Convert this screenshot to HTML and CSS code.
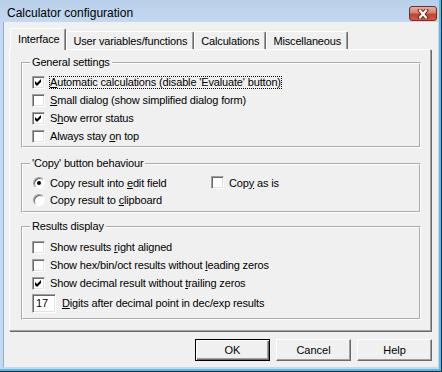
FILE: index.html
```html
<!DOCTYPE html>
<html lang="en">
<head>
    <meta charset="UTF-8">
    <title>Calculator configuration</title>
    <link rel="stylesheet" href="styles.css">
</head>
<body>
    <div class="window">
        <div class="titlebar">
            <span class="title">Calculator configuration</span>
            <span class="close">
                <svg width="14" height="10" viewBox="0 0 14 10">
                    <path d="M4 1.5 L10 8.5 M10 1.5 L4 8.5" stroke="#5a1f16" stroke-width="4" stroke-linecap="square"/>
                    <path d="M4 1.5 L10 8.5 M10 1.5 L4 8.5" stroke="#fff" stroke-width="2.2" stroke-linecap="square"/>
                </svg>
            </span>
        </div>
        <div class="client">
            <div class="tabs">
                <div class="tab tab--active">Interface</div>
                <div class="tab">User variables/functions</div>
                <div class="tab">Calculations</div>
                <div class="tab">Miscellaneous</div>
            </div>
            <div class="panel">
                <fieldset class="group group--general">
                    <legend>General settings</legend>
                    <div class="opt"><span class="box box--on"></span><span class="focus"><u>A</u>utomatic calculations (disable 'Evaluate' button)</span></div>
                    <div class="opt"><span class="box"></span><span><u>S</u>mall dialog (show simplified dialog form)</span></div>
                    <div class="opt"><span class="box box--on"></span><span>S<u>h</u>ow error status</span></div>
                    <div class="opt"><span class="box"></span><span>Always stay <u>o</u>n top</span></div>
                </fieldset>
                <fieldset class="group group--copy">
                    <legend>'Copy' button behaviour</legend>
                    <div class="copy-grid">
                        <div class="opt opt--short"><span class="radio radio--on"></span><span>Copy result into <u>e</u>dit field</span></div>
                        <div class="opt opt--short"><span class="box"></span><span>Cop<u>y</u> as is</span></div>
                        <div class="opt opt--short"><span class="radio"></span><span>Copy result to <u>c</u>lipboard</span></div>
                    </div>
                </fieldset>
                <fieldset class="group group--results">
                    <legend>Results display</legend>
                    <div class="opt"><span class="box"></span><span>Show results <u>r</u>ight aligned</span></div>
                    <div class="opt"><span class="box"></span><span>Show hex/bin/oct results without <u>l</u>eading zeros</span></div>
                    <div class="opt"><span class="box box--on"></span><span>Show decimal result without <u>t</u>railing zeros</span></div>
                    <div class="opt opt--edit"><span class="edit">17</span><span><u>D</u>igits after decimal point in dec/exp results</span></div>
                </fieldset>
            </div>
            <div class="buttons">
                <div class="btn btn--default">OK</div>
                <div class="btn">Cancel</div>
                <div class="btn">Help</div>
            </div>
        </div>
    </div>
</body>
</html>
```

FILE: styles.css
```css
html, body {
    margin: 0;
    background: #c6daf0;
}
body {
    font-family: "Liberation Sans", Arial, sans-serif;
    font-size: 11px;
    color: #000;
}
u {
    text-decoration: underline;
    text-underline-offset: 1px;
}

/* window frame */
.window {
    width: 442px;
    height: 372px;
    box-sizing: border-box;
    padding: 0 4px 5px;
    background: linear-gradient(#b9d0ea, #c4d8ef 22px, #c4d8ef);
    box-shadow: inset -1px -1px 0 #1d2733, inset -3px -3px 0 #45c3f0;
    display: flex;
    flex-direction: column;
}
.titlebar {
    height: 22px;
    display: flex;
    justify-content: space-between;
    align-items: flex-start;
    padding-left: 3px;
}
.title {
    font-size: 12px;
    line-height: 14px;
    margin-top: 6px;
}
.close {
    width: 28px;
    height: 15px;
    margin: 6px 1px 0 0;
    box-sizing: border-box;
    border: 1px solid #7b2c20;
    border-radius: 3px;
    background: linear-gradient(#e9ad9f, #d8806e 45%, #c2432f 55%, #cf5a45);
    display: flex;
    align-items: center;
    justify-content: center;
}
.close svg {
    display: block;
}

.client {
    flex: 1;
    background: #f0f0f0;
    box-shadow: -1px 0 0 #93adcb;
    display: flex;
    flex-direction: column;
    padding: 6px 0;
}

/* tabs */
.tabs {
    height: 22px;
    margin: 0 0 -1px 6px;
    display: flex;
    align-items: flex-end;
    position: relative;
    z-index: 1;
}
.tab {
    height: 18px;
    box-sizing: border-box;
    margin-bottom: 1px;
    padding: 2px 6px 0;
    line-height: 15px;
    letter-spacing: -0.15px;
    white-space: nowrap;
    background: #f0f0f0;
    border: 1px solid;
    border-bottom: none;
    border-color: #fff #696969 #fff #fff;
    box-shadow: inset -1px 0 0 #a0a0a0;
    border-radius: 2px 2px 0 0;
}
.tab--active {
    height: 22px;
    margin-bottom: 0;
    padding: 3px 6px 0 7px;
}

.panel {
    flex: 1;
    margin: 0 7px 8px 5px;
    border: 1px solid;
    border-color: #fff #a0a0a0 #a0a0a0 #fff;
    box-shadow: 1px 1px 0 #696969;
    padding: 0 9px 0 11px;
}

/* group boxes */
.group {
    margin: 0;
    border: 2px groove #fff;
    padding: 4px 8px 1px 9px;
    letter-spacing: -0.15px;
}
.group legend {
    padding: 0 2px;
    margin-left: -2px;
    line-height: 13px;
}
.group--general {
    margin-top: 6px;
}
.group--copy {
    margin-top: 9px;
    padding-bottom: 3px;
}
.group--results {
    margin-top: 7px;
    padding-top: 5px;
    padding-bottom: 4px;
}

.opt {
    height: 18px;
    display: flex;
    align-items: center;
    gap: 5px;
    white-space: nowrap;
}
.opt--short {
    height: 17px;
}
.opt--edit {
    height: 22px;
    gap: 6px;
}
.copy-grid {
    display: grid;
    grid-template-columns: 179px auto;
}

.focus {
    border: 1px dotted #000;
    margin-left: -1px;
    line-height: 11px;
}

/* checkbox, radio, edit */
.box {
    width: 13px;
    height: 13px;
    box-sizing: border-box;
    flex: none;
    background: #fff;
    border: 1px solid;
    border-color: #a0a0a0 #fff #fff #a0a0a0;
    box-shadow: inset 1px 1px 0 #696969, inset -1px -1px 0 #e3e3e3;
}
.box--on {
    background: #fff url("data:image/svg+xml,%3Csvg xmlns='http://www.w3.org/2000/svg' width='11' height='11'%3E%3Cpolygon points='2,4 4,6 8,2 8,5 4,9 2,7' fill='%23000'/%3E%3C/svg%3E") no-repeat 0 0;
}
.radio {
    width: 12px;
    height: 12px;
    box-sizing: border-box;
    flex: none;
    margin-left: 1px;
    border-radius: 50%;
    background: #fff;
    border: 1px solid;
    border-color: #a0a0a0 #fff #fff #a0a0a0;
    box-shadow: inset 1px 1px 0 #696969;
    display: flex;
    align-items: center;
    justify-content: center;
}
.radio--on::after {
    content: "";
    width: 4px;
    height: 4px;
    border-radius: 50%;
    background: #000;
}
.edit {
    width: 24px;
    height: 19px;
    box-sizing: border-box;
    flex: none;
    background: #fff;
    border: 1px solid;
    border-color: #a0a0a0 #fff #fff #a0a0a0;
    box-shadow: inset 1px 1px 0 #696969, inset -1px -1px 0 #e3e3e3;
    padding: 2px 0 0 3px;
    line-height: 13px;
}

/* buttons */
.buttons {
    display: flex;
    justify-content: flex-end;
    gap: 6px;
    padding-right: 6px;
}
.btn {
    width: 75px;
    height: 22px;
    box-sizing: border-box;
    border: 1px solid;
    border-color: #fff #696969 #696969 #fff;
    box-shadow: inset -1px -1px 0 #a0a0a0;
    display: flex;
    align-items: center;
    justify-content: center;
}
.btn--default {
    border-color: #000;
    box-shadow: inset 1px 1px 0 #fff, inset -1px -1px 0 #696969, inset -2px -2px 0 #a0a0a0;
}
```
